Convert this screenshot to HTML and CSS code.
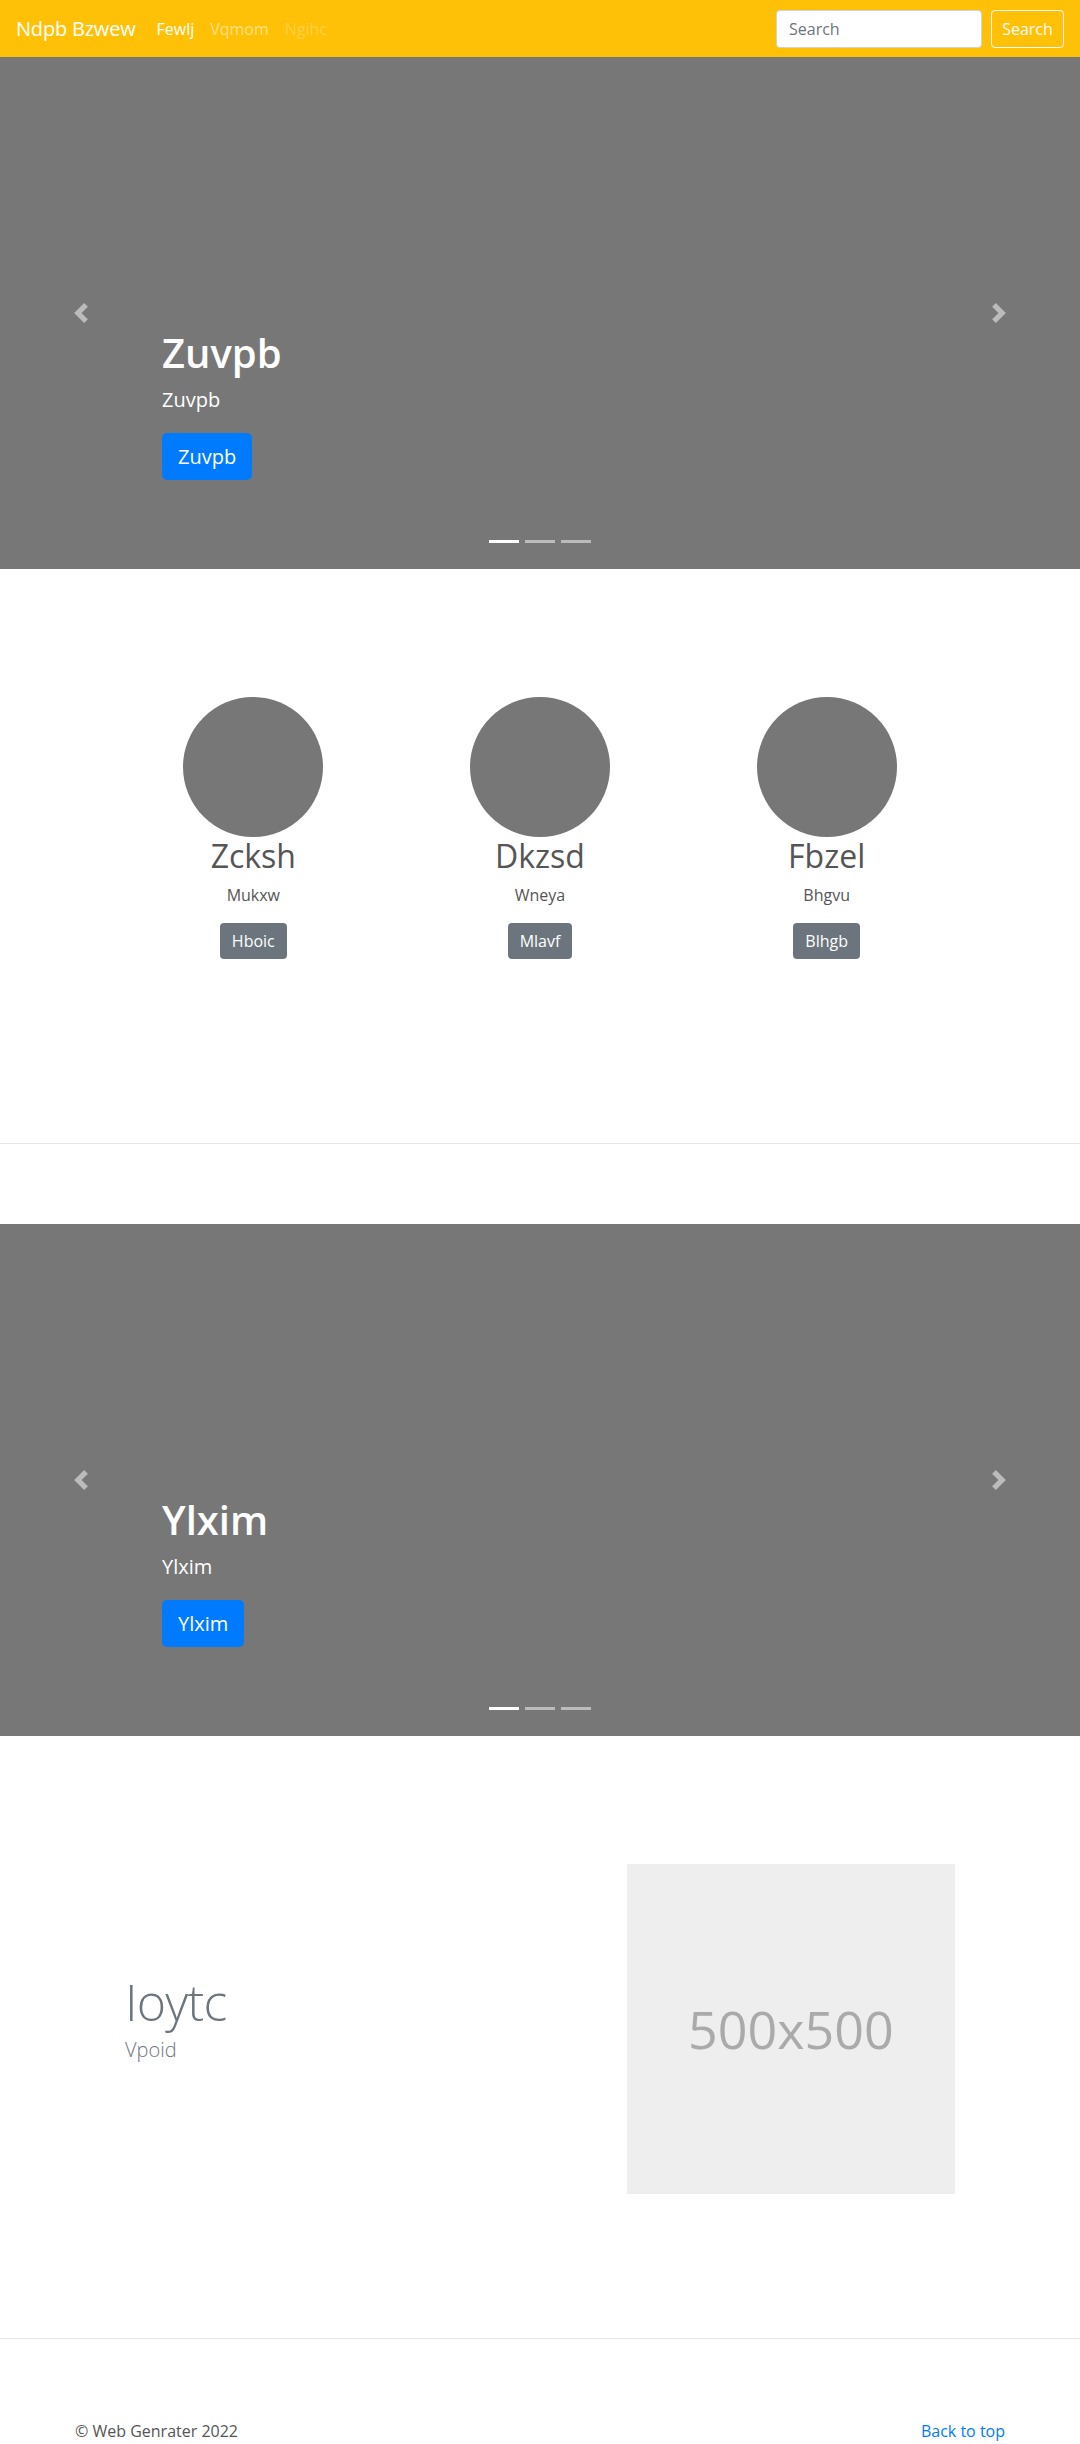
FILE: index.html
```html
<!DOCTYPE html>
<html lang="en">
<head>
<meta charset="utf-8">
<title>Ndpb Bzwew</title>
<link rel="stylesheet" href="styles.css">
</head>
<body>
<header class="navbar">
  <a class="brand" href="#">Ndpb Bzwew</a>
  <nav class="nav">
    <a class="nav-link active" href="#">Fewlj</a>
    <a class="nav-link" href="#">Vqmom</a>
    <a class="nav-link disabled" href="#">Ngihc</a>
  </nav>
  <form class="search">
    <input class="search-input" type="text" placeholder="Search">
    <button class="btn-outline" type="button">Search</button>
  </form>
</header>

<section class="carousel">
  <ol class="indicators">
    <li class="active"></li>
    <li></li>
    <li></li>
  </ol>
  <div class="caption">
    <h1 class="caption-title">Zuvpb</h1>
    <p class="caption-text">Zuvpb</p>
    <p class="caption-action"><a class="btn-primary" href="#">Zuvpb</a></p>
  </div>
  <a class="control control-prev" href="#"><svg viewBox="0 0 8 8" width="20" height="20"><path fill="#fff" d="M5.25 0l-4 4 4 4 1.5-1.5L4.25 4l2.5-2.5L5.25 0z"/></svg></a>
  <a class="control control-next" href="#"><svg viewBox="0 0 8 8" width="20" height="20"><path fill="#fff" d="M2.75 0l-1.5 1.5L3.75 4l-2.5 2.5L2.75 8l4-4-4-4z"/></svg></a>
</section>

<section class="section">
  <div class="wrap marketing">
    <div class="person">
      <div class="avatar"></div>
      <h2 class="person-name">Zcksh</h2>
      <p class="person-text">Mukxw</p>
      <p><a class="btn-secondary" href="#">Hboic</a></p>
    </div>
    <div class="person">
      <div class="avatar"></div>
      <h2 class="person-name">Dkzsd</h2>
      <p class="person-text">Wneya</p>
      <p><a class="btn-secondary" href="#">Mlavf</a></p>
    </div>
    <div class="person">
      <div class="avatar"></div>
      <h2 class="person-name">Fbzel</h2>
      <p class="person-text">Bhgvu</p>
      <p><a class="btn-secondary" href="#">Blhgb</a></p>
    </div>
  </div>
</section>

<hr class="divider">

<section class="carousel carousel-second">
  <ol class="indicators">
    <li class="active"></li>
    <li></li>
    <li></li>
  </ol>
  <div class="caption">
    <h1 class="caption-title">Ylxim</h1>
    <p class="caption-text">Ylxim</p>
    <p class="caption-action"><a class="btn-primary" href="#">Ylxim</a></p>
  </div>
  <a class="control control-prev" href="#"><svg viewBox="0 0 8 8" width="20" height="20"><path fill="#fff" d="M5.25 0l-4 4 4 4 1.5-1.5L4.25 4l2.5-2.5L5.25 0z"/></svg></a>
  <a class="control control-next" href="#"><svg viewBox="0 0 8 8" width="20" height="20"><path fill="#fff" d="M2.75 0l-1.5 1.5L3.75 4l-2.5 2.5L2.75 8l4-4-4-4z"/></svg></a>
</section>

<section class="section">
  <div class="wrap featurette">
    <div class="feature-text">
      <h2 class="feature-heading">Ioytc</h2>
      <p class="feature-lead">Vpoid</p>
    </div>
    <div class="feature-media">
      <div class="placeholder">500x500</div>
    </div>
  </div>
</section>

<hr class="divider">

<footer class="footer">
  <p class="footer-copy">© Web Genrater 2022</p>
  <a class="footer-top" href="#">Back to top</a>
</footer>
</body>
</html>
```

FILE: styles.css
```css
* { box-sizing: border-box; }

body {
  margin: 0;
  font-family: "Open Sans", "Noto Sans", "Liberation Sans", sans-serif;
  font-size: 16px;
  line-height: 1.5;
  color: #212529;
  background: #fff;
}

a { text-decoration: none; }
p { margin: 0 0 16px; }

/* navbar */
.navbar {
  display: flex;
  align-items: center;
  height: 57px;
  padding: 0 16px;
  background: #ffc107;
}
.brand {
  color: #fff;
  font-size: 20px;
  line-height: 30px;
  margin-right: 13px;
  letter-spacing: -0.2px;
}
.nav { display: flex; }
.nav-link {
  padding: 8px;
  color: rgba(255,255,255,.5);
  line-height: 24px;
}
.nav-link.active { color: #fff; }
.nav-link.disabled { color: rgba(255,255,255,.25); }
.search {
  margin-left: auto;
  display: flex;
  gap: 9px;
}
.search-input {
  width: 206px;
  height: 38px;
  padding: 6px 12px;
  border: 1px solid #ced4da;
  border-radius: 4px;
  font: inherit;
  font-size: 16px;
  color: #495057;
  background: #fff;
}
.search-input::placeholder { color: #6c757d; }
.btn-outline {
  height: 38px;
  width: 73px;
  padding: 0;
  border: 1px solid #f8f9fa;
  border-radius: 4px;
  background: transparent;
  color: #f8f9fa;
  font: inherit;
  font-size: 16px;
}

/* carousel */
.carousel {
  position: relative;
  height: 512px;
  background: #777;
  overflow: hidden;
}
.indicators {
  position: absolute;
  left: 0;
  right: 0;
  bottom: 26px;
  margin: 0;
  padding: 0;
  list-style: none;
  display: flex;
  justify-content: center;
}
.indicators li {
  width: 30px;
  height: 3px;
  margin: 0 3px;
  background: #fff;
  opacity: .5;
}
.indicators li.active { opacity: 1; }
.caption {
  position: absolute;
  left: 15%;
  right: 15%;
  bottom: 48px;
  padding: 20px 0;
  color: #fff;
}
.caption-title {
  margin: 0 0 8px;
  font-size: 40px;
  font-weight: 600;
  line-height: 48px;
}
.caption-text {
  font-size: 20px;
  line-height: 30px;
  margin-bottom: 18px;
}
.caption-action { margin-bottom: 20px; line-height: 48px; }
.btn-primary {
  display: inline-block;
  vertical-align: top;
  padding: 8px 16px;
  border-radius: 5px;
  background: #007bff;
  color: #fff;
  font-size: 20px;
  line-height: 31px;
}
.control {
  position: absolute;
  top: 0;
  bottom: 0;
  width: 15%;
  display: flex;
  align-items: center;
  justify-content: center;
  opacity: .5;
}
.control-prev { left: 0; }
.control-next { right: 0; }
.control svg { display: block; }

/* sections */
.section { padding: 128px 0 144px; }
.wrap {
  width: 860px;
  margin: 0 auto;
}
.marketing {
  display: grid;
  grid-template-columns: repeat(3, 1fr);
}
.person {
  padding: 0 15px;
  text-align: center;
  color: #555;
  margin-bottom: 24px;
}
.person p:last-child { margin-bottom: 16px; }
.avatar {
  width: 140px;
  height: 140px;
  margin: 0 auto;
  border-radius: 50%;
  background: #777;
}
.person-name {
  margin: 0 0 8px;
  font-size: 32px;
  font-weight: 400;
  line-height: 38px;
}
.person-text { color: #555; }
.btn-secondary {
  display: inline-block;
  padding: 6px 12px;
  border-radius: 4px;
  background: #6c757d;
  color: #fff;
  font-size: 16px;
  line-height: 24px;
}

.divider {
  margin: 0;
  border: 0;
  border-top: 1px solid rgba(0,0,0,.1);
}
.carousel-second { margin-top: 80px; }

/* featurette */
.featurette {
  display: grid;
  grid-template-columns: 7fr 5fr;
  align-items: center;
}
.feature-text { padding: 0 15px; }
.feature-heading {
  margin: 0 0 8px;
  font-size: 50px;
  font-weight: 300;
  line-height: 1;
  letter-spacing: -0.8px;
  color: #6c757d;
}
.feature-lead {
  font-size: 20px;
  font-weight: 300;
  line-height: 30px;
  color: #6c757d;
}
.feature-media { padding: 0 15px; }
.placeholder {
  width: 100%;
  height: 330px;
  background: #eee;
  color: #aaa;
  font-size: 52px;
  display: flex;
  align-items: center;
  justify-content: center;
}

/* footer */
.footer {
  width: 960px;
  margin: 0 auto;
  padding: 80px 15px 48px;
  display: flex;
  justify-content: space-between;
  color: #555;
}
.footer-copy { margin: 0; }
.footer-top { color: #007bff; }
```
